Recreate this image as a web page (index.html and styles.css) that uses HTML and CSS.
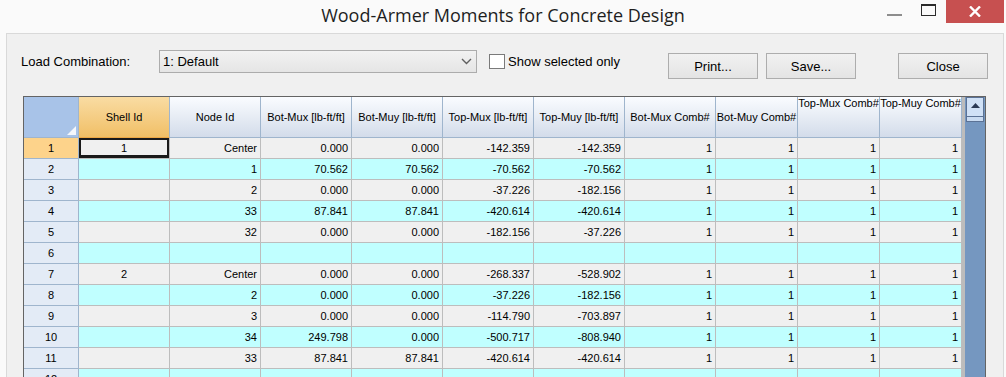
FILE: index.html
```html
<!DOCTYPE html>
<html>
<head>
  <link rel="stylesheet" href="styles.css">
</head>
<body>
  <div class="titlebar">
    <div></div>
    <div class="title">Wood-Armer Moments for Concrete Design</div>
    <div class="win-buttons">
      <span class="win-min"></span>
      <span class="win-max"></span>
      <span class="win-close">
        <svg width="12" height="11" viewBox="0 0 12 11"><path d="M1 0.5 L11 10.5 M11 0.5 L1 10.5" stroke="#fff" stroke-width="2.4"/></svg>
      </span>
    </div>
  </div>

  <div class="panel">
    <div class="toolbar">
      <label class="combo-label">Load Combination:</label>
      <div class="combo">
        <span>1: Default</span>
        <svg width="11" height="7" viewBox="0 0 11 7"><path d="M1 1 L5.5 5.5 L10 1" stroke="#606060" stroke-width="1.4" fill="none"/></svg>
      </div>
      <label class="check"><span class="box"></span>Show selected only</label>
      <button class="btn btn-print">Print...</button>
      <button class="btn btn-save">Save...</button>
      <button class="btn btn-close">Close</button>
    </div>

    <div class="frame">
      <div class="grid">
        <div class="row head">
          <div class="corner"></div>
          <div class="hd hd-sel">Shell Id</div>
          <div class="hd">Node Id</div>
          <div class="hd">Bot-Mux [lb-ft/ft]</div>
          <div class="hd">Bot-Muy [lb-ft/ft]</div>
          <div class="hd">Top-Mux [lb-ft/ft]</div>
          <div class="hd">Top-Muy [lb-ft/ft]</div>
          <div class="hd">Bot-Mux Comb#</div>
          <div class="hd">Bot-Muy Comb#</div>
          <div class="hd hd-top">Top-Mux Comb#</div>
          <div class="hd hd-top">Top-Muy Comb#</div>
        </div>
        <div class="row"><div class="rh rh-sel">1</div><div class="c mid cur">1</div><div class="c">Center</div><div class="c">0.000</div><div class="c">0.000</div><div class="c">-142.359</div><div class="c">-142.359</div><div class="c">1</div><div class="c">1</div><div class="c">1</div><div class="c">1</div></div>
        <div class="row alt"><div class="rh">2</div><div class="c mid"></div><div class="c">1</div><div class="c">70.562</div><div class="c">70.562</div><div class="c">-70.562</div><div class="c">-70.562</div><div class="c">1</div><div class="c">1</div><div class="c">1</div><div class="c">1</div></div>
        <div class="row"><div class="rh">3</div><div class="c mid"></div><div class="c">2</div><div class="c">0.000</div><div class="c">0.000</div><div class="c">-37.226</div><div class="c">-182.156</div><div class="c">1</div><div class="c">1</div><div class="c">1</div><div class="c">1</div></div>
        <div class="row alt"><div class="rh">4</div><div class="c mid"></div><div class="c">33</div><div class="c">87.841</div><div class="c">87.841</div><div class="c">-420.614</div><div class="c">-420.614</div><div class="c">1</div><div class="c">1</div><div class="c">1</div><div class="c">1</div></div>
        <div class="row"><div class="rh">5</div><div class="c mid"></div><div class="c">32</div><div class="c">0.000</div><div class="c">0.000</div><div class="c">-182.156</div><div class="c">-37.226</div><div class="c">1</div><div class="c">1</div><div class="c">1</div><div class="c">1</div></div>
        <div class="row alt"><div class="rh">6</div><div class="c mid"></div><div class="c"></div><div class="c"></div><div class="c"></div><div class="c"></div><div class="c"></div><div class="c"></div><div class="c"></div><div class="c"></div><div class="c"></div></div>
        <div class="row"><div class="rh">7</div><div class="c mid">2</div><div class="c">Center</div><div class="c">0.000</div><div class="c">0.000</div><div class="c">-268.337</div><div class="c">-528.902</div><div class="c">1</div><div class="c">1</div><div class="c">1</div><div class="c">1</div></div>
        <div class="row alt"><div class="rh">8</div><div class="c mid"></div><div class="c">2</div><div class="c">0.000</div><div class="c">0.000</div><div class="c">-37.226</div><div class="c">-182.156</div><div class="c">1</div><div class="c">1</div><div class="c">1</div><div class="c">1</div></div>
        <div class="row"><div class="rh">9</div><div class="c mid"></div><div class="c">3</div><div class="c">0.000</div><div class="c">0.000</div><div class="c">-114.790</div><div class="c">-703.897</div><div class="c">1</div><div class="c">1</div><div class="c">1</div><div class="c">1</div></div>
        <div class="row alt"><div class="rh">10</div><div class="c mid"></div><div class="c">34</div><div class="c">249.798</div><div class="c">0.000</div><div class="c">-500.717</div><div class="c">-808.940</div><div class="c">1</div><div class="c">1</div><div class="c">1</div><div class="c">1</div></div>
        <div class="row"><div class="rh">11</div><div class="c mid"></div><div class="c">33</div><div class="c">87.841</div><div class="c">87.841</div><div class="c">-420.614</div><div class="c">-420.614</div><div class="c">1</div><div class="c">1</div><div class="c">1</div><div class="c">1</div></div>
        <div class="row alt"><div class="rh">12</div><div class="c mid"></div><div class="c"></div><div class="c"></div><div class="c"></div><div class="c"></div><div class="c"></div><div class="c"></div><div class="c"></div><div class="c"></div><div class="c"></div></div>
      </div>
      <div class="splitter"></div>
      <div class="scrollbar">
        <div class="scroll-up"><svg width="9" height="5" viewBox="0 0 9 5"><path d="M0 5 L4.5 0 L9 5 Z" fill="#2b3a55"/></svg></div>
        <div class="scroll-thumb"></div>
      </div>
    </div>
  </div>
</body>
</html>
```

FILE: styles.css
```css
body {
  margin: 0;
  height: 377px;
  overflow: hidden;
  background: #fafafa;
  font-family: "Liberation Sans", Arial, sans-serif;
  color: #000;
}

/* window title */
.titlebar {
  display: grid;
  grid-template-columns: 1fr auto 1fr;
  height: 33px;
}

.title {
  font-family: "Open Sans", "Noto Sans", sans-serif;
  font-size: 18px;
  color: #1e1e1e;
  padding-top: 3px;
}

.win-buttons {
  display: flex;
  justify-content: flex-end;
  align-items: flex-start;
  padding-right: 2px;
}

.win-min {
  width: 15px;
  height: 2px;
  margin-top: 14px;
  background: #8d8d8d;
}

.win-max {
  box-sizing: border-box;
  width: 15px;
  height: 12px;
  margin: 4px 10px 0 19px;
  border: 1px solid #2b2b2b;
  border-top-width: 2px;
}

.win-close {
  width: 58px;
  height: 23px;
  background: #c75050;
  display: flex;
  justify-content: center;
  align-items: center;
}

/* dialog body */
.panel {
  margin: 0 2px 0 6px;
  height: 400px;
  background: #f0f0f0;
  border: 1px solid #d9d9d9;
  border-bottom: none;
}

.toolbar {
  display: flex;
  align-items: flex-start;
  padding: 16px 15px 0 14px;
  height: 46px;
  font-size: 13px;
}

.combo-label {
  width: 138px;
  line-height: 23px;
}

.combo {
  box-sizing: border-box;
  width: 318px;
  height: 23px;
  border: 1px solid #acacac;
  background: linear-gradient(#f2f2f2, #e5e5e5);
  display: flex;
  align-items: center;
  justify-content: space-between;
  padding: 0 4px 0 3px;
}

.check {
  display: flex;
  align-items: center;
  height: 23px;
  margin-left: 12px;
}

.check .box {
  box-sizing: border-box;
  width: 16px;
  height: 15px;
  margin-right: 3px;
  border: 1px solid #7a7a7a;
  background: #fff;
}

.btn {
  box-sizing: border-box;
  width: 90px;
  height: 26px;
  margin-top: 3px;
  border: 1px solid #adadad;
  background: linear-gradient(#f1f1f1, #e4e4e4);
  font: 13px "Liberation Sans", Arial, sans-serif;
  color: #000;
  padding: 0;
}

.btn-print { margin-left: auto; }
.btn-save { margin-left: 8px; }
.btn-close { margin-left: 42px; }

/* table */
.frame {
  display: flex;
  width: fit-content;
  margin-left: 16px;
  border: 1px solid #646464;
  border-bottom: none;
  font-size: 11px;
}

.row {
  display: grid;
  grid-template-columns: 55px repeat(7, 91px) repeat(3, 82px);
  height: 21px;
}

.row > div {
  box-sizing: border-box;
  border-right: 1px solid #bdbdbd;
  border-bottom: 1px solid #bdbdbd;
  display: flex;
  align-items: center;
  justify-content: flex-end;
  padding-right: 3px;
  white-space: nowrap;
  overflow: hidden;
}

.row.alt > div { background: #c0ffff; }

.row > .mid { justify-content: center; padding: 0; }

.row > .cur { box-shadow: inset 0 0 0 2px #1a1a1a, inset 0 -1px 0 2px #1a1a1a; }

.row.head { height: 41px; }

.row.head > div {
  justify-content: center;
  padding: 0;
  border-color: #9fb5cd;
  background: linear-gradient(#fafcff, #d3dcea);
}

.row.head > .corner {
  background: #a8c3e8;
  position: relative;
}

.corner::after {
  content: "";
  position: absolute;
  right: 2px;
  bottom: 2px;
  border-left: 9px solid transparent;
  border-bottom: 9px solid #f4f7fc;
}

.row.head > .hd-sel {
  background: linear-gradient(#f9dca3, #f1bf66);
  border-color: #9fb5cd #9fb5cd #eea844 #eea844;
  border-left: 1px solid #eea844;
  margin-left: -1px;
}

.row.head > .hd-top {
  align-items: flex-start;
  padding-top: 0;
}

.row > .rh {
  justify-content: center;
  padding: 0;
  background: #e3ebf6;
  border-color: #9fb5cd;
}

.row.alt > .rh { background: #e3ebf6; }

.row > .rh-sel { background: #fdd38b; }

.splitter {
  width: 3px;
  background: #bcbcbc;
}

.scrollbar {
  width: 20px;
  background: #7597c0;
}

.scroll-up {
  box-sizing: border-box;
  height: 20px;
  margin: 0 1px 0 1px;
  background: #d0e1f6;
  border: 1px solid #5b7295;
  display: flex;
  justify-content: center;
  align-items: center;
  padding-bottom: 4px;
}

.scroll-thumb {
  height: 5px;
  margin: 0 1px;
  background: #c9dbf1;
  border: 1px solid #5b7295;
  border-top: none;
  box-sizing: border-box;
}
```
